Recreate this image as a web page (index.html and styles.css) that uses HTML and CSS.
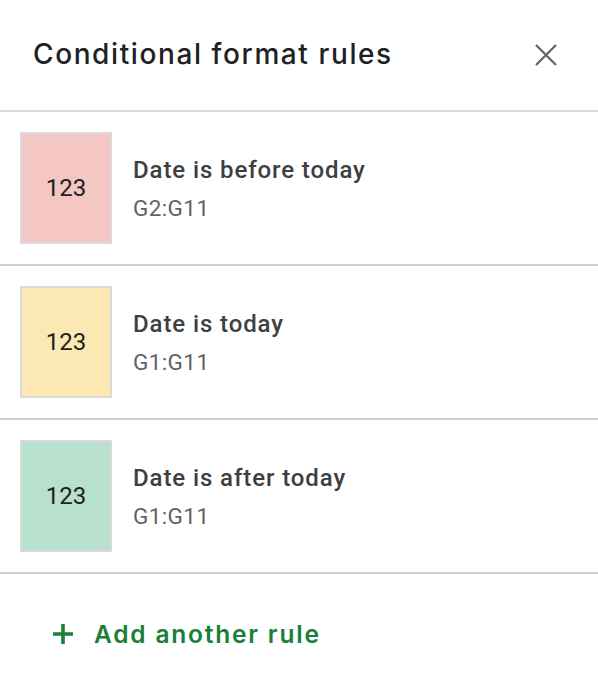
FILE: index.html
```html
<!DOCTYPE html>
<html>
<head>
<meta charset="utf-8">
<link rel="stylesheet" href="styles.css">
</head>
<body>
<div class="panel">
  <header class="head">
    <h1 class="title">Conditional format rules</h1>
    <button class="close" aria-label="Close">
      <svg viewBox="0 0 24 24" width="24" height="24"><path d="M2 2 L22 22 M22 2 L2 22" stroke="#5f6368" stroke-width="2.2" fill="none"/></svg>
    </button>
  </header>
  <div class="rule">
    <div class="swatch red">123</div>
    <div class="info">
      <div class="name">Date is before today</div>
      <div class="range">G2:G11</div>
    </div>
  </div>
  <div class="rule">
    <div class="swatch yellow">123</div>
    <div class="info">
      <div class="name">Date is today</div>
      <div class="range">G1:G11</div>
    </div>
  </div>
  <div class="rule">
    <div class="swatch green">123</div>
    <div class="info">
      <div class="name">Date is after today</div>
      <div class="range">G1:G11</div>
    </div>
  </div>
  <div class="add">
    <svg class="plus" viewBox="0 0 20 20" width="20" height="20"><path d="M10 0 V20 M0 10 H20" stroke="#188038" stroke-width="3.6" fill="none"/></svg>
    <span class="add-label">Add another rule</span>
  </div>
</div>
</body>
</html>
```
FILE: styles.css
```css
html, body {
  margin: 0;
  padding: 0;
  background: #fff;
}
.panel {
  width: 598px;
  font-family: Roboto, "Noto Sans", sans-serif;
}
.head {
  height: 112px;
  display: flex;
  align-items: center;
  justify-content: space-between;
  padding: 0 40px 0 33px;
  box-sizing: border-box;
  border-bottom: 2px solid #dadce0;
}
.title {
  margin: 0 0 2px 0;
  font-family: Inter, "Open Sans", sans-serif;
  font-weight: 500;
  font-size: 28px;
  color: #202124;
  letter-spacing: 1.6px;
}
.close {
  border: 0;
  background: none;
  padding: 0;
  width: 24px;
  height: 24px;
  display: flex;
  align-items: center;
  justify-content: center;
}
.rule {
  display: flex;
  align-items: center;
  padding: 20px 20px;
  border-bottom: 2px solid #d0d0d0;
}
.swatch {
  width: 88px;
  height: 108px;
  border: 2px solid #dadada;
  display: flex;
  align-items: center;
  justify-content: center;
  font-size: 24px;
  color: #202124;
  flex: none;
}
.red { background: #f4c7c3; }
.yellow { background: #fce8b2; }
.green { background: #b7e1cd; }
.info {
  margin-left: 21px;
  margin-top: 5px;
}
.name {
  font-size: 24px;
  font-weight: 500;
  color: #3c4043;
  line-height: 32px;
  letter-spacing: 0.9px;
}
.range {
  padding-top: 4px;
  font-size: 22.5px;
  color: #5f6368;
  line-height: 37px;
  letter-spacing: 0.4px;
}
.add {
  display: flex;
  align-items: center;
  padding: 45px 0 0 53px;
}
.add-label {
  margin-left: 21px;
  font-family: Inter, "Open Sans", sans-serif;
  font-weight: 600;
  font-size: 24.5px;
  color: #188038;
  letter-spacing: 1.8px;
}
```
